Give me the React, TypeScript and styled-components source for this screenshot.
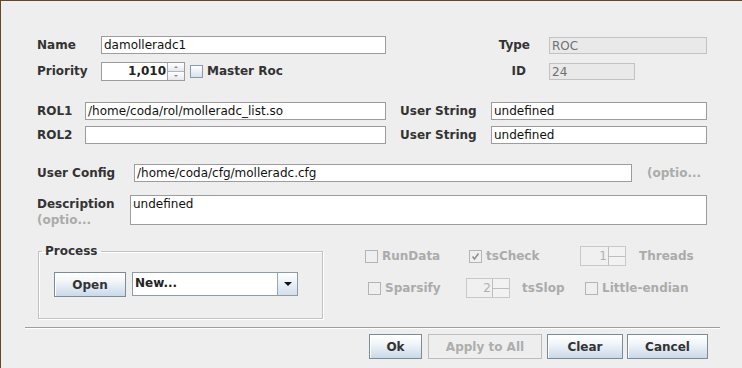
import styled, { createGlobalStyle } from "styled-components";

const GlobalStyle = createGlobalStyle`
  html, body {
    margin: 0;
    padding: 0;
    background: #eeeeee;
  }
`;

const Dialog = styled.div`
  width: 742px;
  height: 368px;
  box-sizing: border-box;
  border-top: 1px solid #6a4424;
  border-left: 1px solid #6a4424;
  background: #eeeeee;
  display: flex;
  flex-direction: column;
  font-family: "DejaVu Sans", "Liberation Sans", sans-serif;
  font-size: 12px;
  color: #333333;
  overflow: hidden;
`;

const Form = styled.div`
  display: flex;
  flex-direction: column;
  padding: 35px 35px 0 36px;
`;

const Row = styled.div<{ $mt?: number; $h?: number; $top?: boolean }>`
  display: flex;
  align-items: ${(p) => (p.$top ? "flex-start" : "center")};
  height: ${(p) => p.$h ?? 18}px;
  margin-top: ${(p) => p.$mt ?? 0}px;
`;

const Label = styled.span<{ $w?: number; $right?: boolean; $mr?: number; $ml?: number; $dim?: boolean }>`
  flex: none;
  font-weight: bold;
  white-space: nowrap;
  width: ${(p) => (p.$w ? `${p.$w}px` : "auto")};
  text-align: ${(p) => (p.$right ? "right" : "left")};
  margin-right: ${(p) => p.$mr ?? 0}px;
  margin-left: ${(p) => p.$ml ?? 0}px;
  color: ${(p) => (p.$dim ? "#ababab" : "#333333")};
`;

const Spacer = styled.div`
  flex: 1;
`;

const TextField = styled.div<{ $w?: number; $h?: number; $disabled?: boolean }>`
  box-sizing: border-box;
  flex: ${(p) => (p.$w ? "none" : "1")};
  width: ${(p) => (p.$w ? `${p.$w}px` : "auto")};
  height: ${(p) => p.$h ?? 18}px;
  border: 1px solid ${(p) => (p.$disabled ? "#c2c2c2" : "#9c9c9c")};
  background: ${(p) => (p.$disabled ? "#e9e9e9" : "#ffffff")};
  color: ${(p) => (p.$disabled ? "#707070" : "#111111")};
  padding: 0 2px;
  line-height: 16px;
  white-space: nowrap;
  overflow: hidden;
`;

const RightCol = styled.div`
  width: 158px;
  flex: none;
  display: flex;
`;

const DescLabel = styled.div`
  width: 93px;
  flex: none;
  display: flex;
  flex-direction: column;
  font-weight: bold;
  line-height: 16px;
  padding-top: 1px;
`;

const Dim = styled.span`
  color: #ababab;
`;

/* spinner */
const SpinBox = styled.div<{ $w: number; $h: number; $disabled?: boolean }>`
  box-sizing: border-box;
  flex: none;
  width: ${(p) => p.$w}px;
  height: ${(p) => p.$h}px;
  display: flex;
  border: 1px solid ${(p) => (p.$disabled ? "#c8c8c8" : "#9c9c9c")};
  background: ${(p) => (p.$disabled ? "#f0f0f0" : "#ffffff")};
`;

const SpinText = styled.div<{ $disabled?: boolean }>`
  flex: 1;
  text-align: right;
  padding-right: 1px;
  line-height: ${(p) => (p.$disabled ? 18 : 17)}px;
  font-weight: ${(p) => (p.$disabled ? "normal" : "bold")};
  color: ${(p) => (p.$disabled ? "#b0b0b0" : "#222222")};
`;

const SpinArrows = styled.div<{ $disabled?: boolean }>`
  width: 16px;
  flex: none;
  display: flex;
  flex-direction: column;
  border-left: 1px solid ${(p) => (p.$disabled ? "#bdbdbd" : "#a8a8a8")};
`;

const SpinHalf = styled.div<{ $down?: boolean; $disabled?: boolean }>`
  flex: 1;
  display: flex;
  align-items: center;
  justify-content: center;
  background: ${(p) => (p.$disabled ? "#f2f2f2" : "linear-gradient(#ffffff, #e4e8ee)")};
  border-top: ${(p) => (p.$down ? `1px solid ${p.$disabled ? "#bdbdbd" : "#b4b4b4"}` : "none")};
`;

const Tri = styled.span<{ $down?: boolean; $size: number; $color: string }>`
  width: 0;
  height: 0;
  border-left: ${(p) => p.$size}px solid transparent;
  border-right: ${(p) => p.$size}px solid transparent;
  ${(p) =>
    p.$down
      ? `border-top: ${p.$size}px solid ${p.$color};`
      : `border-bottom: ${p.$size}px solid ${p.$color};`}
`;

function Spinner({ value, w, h, disabled }: { value: string; w: number; h: number; disabled?: boolean }) {
  return (
    <SpinBox $w={w} $h={h} $disabled={disabled}>
      <SpinText $disabled={disabled}>{value}</SpinText>
      <SpinArrows $disabled={disabled}>
        <SpinHalf $disabled={disabled}>
          {!disabled && <Tri $size={2} $color="#8a8a8a" />}
        </SpinHalf>
        <SpinHalf $down $disabled={disabled}>
          {!disabled && <Tri $down $size={2} $color="#8a8a8a" />}
        </SpinHalf>
      </SpinArrows>
    </SpinBox>
  );
}

/* checkbox */
const Box = styled.span<{ $disabled?: boolean }>`
  box-sizing: border-box;
  flex: none;
  width: 13px;
  height: 13px;
  margin-right: 4px;
  border: 1px solid ${(p) => (p.$disabled ? "#b4b4b4" : "#8a9aaa")};
  background: ${(p) => (p.$disabled ? "#efefef" : "linear-gradient(#ffffff, #d5e2ef)")};
  display: flex;
  align-items: center;
  justify-content: center;
`;

const CheckItem = styled.div<{ $ml?: number; $w?: number }>`
  display: flex;
  align-items: center;
  margin-left: ${(p) => p.$ml ?? 0}px;
  width: ${(p) => (p.$w ? `${p.$w}px` : "auto")};
  flex: none;
`;

function Check({ label, checked, disabled, w }: { label: string; checked?: boolean; disabled?: boolean; w?: number }) {
  return (
    <CheckItem $w={w}>
      <Box $disabled={disabled}>
        {checked && (
          <svg width="9" height="9" viewBox="0 0 9 9">
            <path d="M1.5 4.5 L3.5 7 L7.5 1.5" stroke="#8f8f8f" strokeWidth="1.6" fill="none" />
          </svg>
        )}
      </Box>
      <Label $dim={disabled}>{label}</Label>
    </CheckItem>
  );
}

/* bottom area */
const Bottom = styled.div`
  display: flex;
  height: 76px;
  margin-top: 19px;
`;

const ProcessSet = styled.fieldset`
  box-sizing: border-box;
  margin: 0 0 0 1px;
  padding: 14px 0 0 15px;
  width: 285px;
  height: 75px;
  border: 1px solid #c2c2c2;
  box-shadow: inset 1px 1px 0 #ffffff, 1px 1px 0 #ffffff;
  display: flex;
  align-items: flex-start;
`;

const Legend = styled.legend`
  font-weight: bold;
  padding: 0 3px;
  margin-left: -12px;
  color: #333333;
`;

const ProcessRow = styled.div`
  display: flex;
  align-items: flex-start;
  gap: 6px;
`;

const Button = styled.button<{ $w: number; $ml?: number; $disabled?: boolean }>`
  box-sizing: border-box;
  width: ${(p) => p.$w}px;
  height: 25px;
  margin-left: ${(p) => p.$ml ?? 0}px;
  padding: 0;
  font-family: "DejaVu Sans", "Liberation Sans", sans-serif;
  font-size: 12px;
  font-weight: bold;
  color: ${(p) => (p.$disabled ? "#adadad" : "#333333")};
  border: 1px solid ${(p) => (p.$disabled ? "#bdbdbd" : "#7d8b99")};
  background: ${(p) =>
    p.$disabled
      ? "#eeeeee"
      : "linear-gradient(#ffffff 0%, #f3f6f9 35%, #c9d9e9 100%)"};
  box-shadow: ${(p) => (p.$disabled ? "none" : "inset 1px 1px 0 #ffffff")};
`;

const Combo = styled.div`
  box-sizing: border-box;
  width: 166px;
  height: 24px;
  display: flex;
  border: 1px solid #8e9aa6;
  background: #ffffff;
`;

const ComboText = styled.div`
  flex: 1;
  font-weight: bold;
  color: #222222;
  padding-left: 2px;
  line-height: 20px;
`;

const ComboArrow = styled.div`
  width: 19px;
  flex: none;
  display: flex;
  align-items: center;
  justify-content: center;
  border-left: 1px solid #9aa6b2;
  background: linear-gradient(#ffffff, #d2dfec);
`;

const Options = styled.div`
  display: flex;
  flex-direction: column;
  margin-left: 42px;
  padding-top: 2px;
`;

const OptRow = styled.div<{ $mt?: number; $ml?: number }>`
  display: flex;
  align-items: center;
  height: 20px;
  margin-top: ${(p) => p.$mt ?? 0}px;
  margin-left: ${(p) => p.$ml ?? 0}px;
`;

const Separator = styled.div`
  margin: 7px 22px 0 24px;
  border-top: 1px solid #9e9e9e;
  border-bottom: 1px solid #ffffff;
`;

const ButtonBar = styled.div`
  display: flex;
  justify-content: flex-end;
  padding-right: 34px;
  margin-top: 5px;
`;

export default function App() {
  return (
    <>
      <GlobalStyle />
      <Dialog>
        <Form>
          <Row>
            <Label $w={64}>Name</Label>
            <TextField $w={285}>damolleradc1</TextField>
            <Spacer />
            <Label $right $mr={19}>Type</Label>
            <RightCol>
              <TextField $disabled $h={17}>ROC</TextField>
            </RightCol>
          </Row>
          <Row $mt={7} $h={20}>
            <Label $w={64}>Priority</Label>
            <Spinner value="1,010" w={84} h={19} />
            <CheckItem $ml={5}>
              <Box />
              <Label>Master Roc</Label>
            </CheckItem>
            <Spacer />
            <Label $right $mr={23}>ID</Label>
            <RightCol>
              <TextField $w={86} $h={17} $disabled>24</TextField>
            </RightCol>
          </Row>
          <Row $mt={21}>
            <Label $w={48}>ROL1</Label>
            <TextField $w={301}>/home/coda/rol/molleradc_list.so</TextField>
            <Label $w={91} $ml={14}>User String</Label>
            <TextField>undefined</TextField>
          </Row>
          <Row $mt={6}>
            <Label $w={48}>ROL2</Label>
            <TextField $w={301}></TextField>
            <Label $w={91} $ml={14}>User String</Label>
            <TextField>undefined</TextField>
          </Row>
          <Row $mt={20}>
            <Label $w={97}>User Config</Label>
            <TextField $w={498}>/home/coda/cfg/molleradc.cfg</TextField>
            <Label $ml={15} $dim>(optio...</Label>
          </Row>
          <Row $mt={13} $h={30} $top>
            <DescLabel>
              <span>Description</span>
              <Dim>(optio...</Dim>
            </DescLabel>
            <TextField $h={30}>undefined</TextField>
          </Row>
          <Bottom>
            <ProcessSet>
              <Legend>Process</Legend>
              <ProcessRow>
                <Button $w={72}>Open</Button>
                <Combo>
                  <ComboText>New...</ComboText>
                  <ComboArrow>
                    <Tri $down $size={4} $color="#111111" />
                  </ComboArrow>
                </Combo>
              </ProcessRow>
            </ProcessSet>
            <Options>
              <OptRow>
                <Check label="RunData" disabled w={104} />
                <Check label="tsCheck" checked disabled w={111} />
                <Spinner value="1" w={46} h={20} disabled />
                <Label $ml={13} $dim>Threads</Label>
              </OptRow>
              <OptRow $mt={12} $ml={3}>
                <Check label="Sparsify" disabled w={98} />
                <Spinner value="2" w={44} h={20} disabled />
                <CheckItem $ml={12} $w={63}>
                  <Label $dim>tsSlop</Label>
                </CheckItem>
                <Check label="Little-endian" disabled />
              </OptRow>
            </Options>
          </Bottom>
        </Form>
        <Separator />
        <ButtonBar>
          <Button $w={53}>Ok</Button>
          <Button $w={114} $ml={6} $disabled>Apply to All</Button>
          <Button $w={76} $ml={5}>Clear</Button>
          <Button $w={81} $ml={4}>Cancel</Button>
        </ButtonBar>
      </Dialog>
    </>
  );
}
